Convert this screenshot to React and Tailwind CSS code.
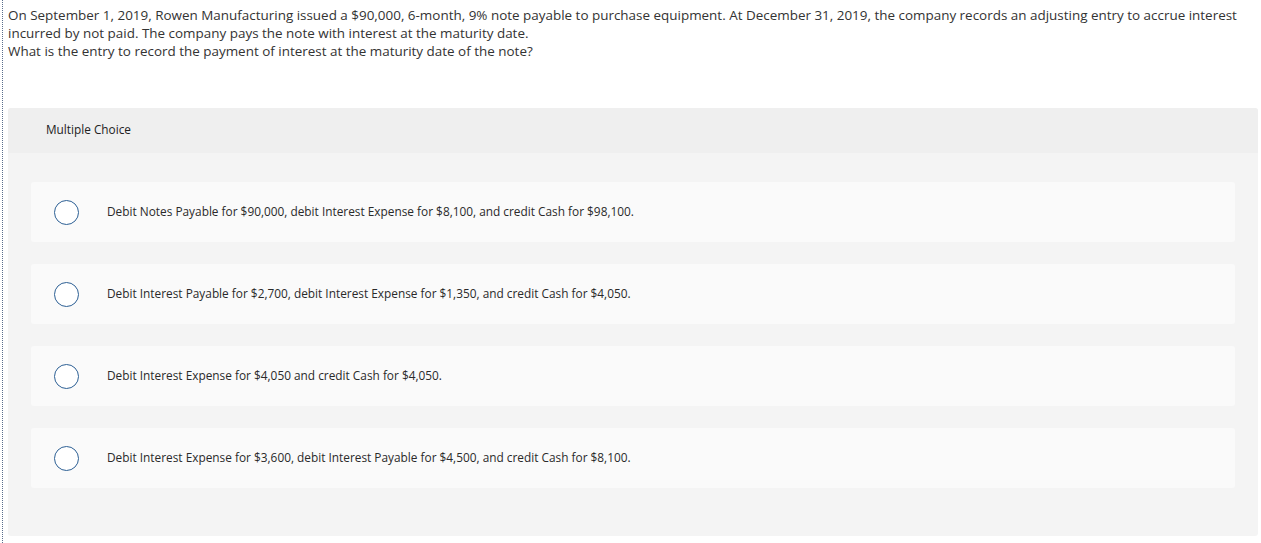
const options = [
  'Debit Notes Payable for $90,000, debit Interest Expense for $8,100, and credit Cash for $98,100.',
  'Debit Interest Payable for $2,700, debit Interest Expense for $1,350, and credit Cash for $4,050.',
  'Debit Interest Expense for $4,050 and credit Cash for $4,050.',
  'Debit Interest Expense for $3,600, debit Interest Payable for $4,500, and credit Cash for $8,100.',
];

export default function App() {
  return (
    <div className="min-h-[543px] bg-white font-['Open_Sans','Liberation_Sans',sans-serif]">
      <div className="ml-[2px] min-h-[543px] border-l border-dotted border-[#5a6e8c] pl-[5px] pt-[6px]">
        <p className="text-[13.45px] leading-[18px] text-[#333]">
          On September 1, 2019, Rowen Manufacturing issued a $90,000, 6-month, 9% note payable to purchase equipment. At December 31, 2019, the company records an adjusting entry to accrue interest incurred by not paid. The company pays the note with interest at the maturity date.
          <br />
          What is the entry to record the payment of interest at the maturity date of the note?
        </p>

        <div className="mt-[48px] mr-[3px] overflow-hidden rounded-[3px] bg-[#f4f4f4]">
          <div className="flex h-[45px] items-center bg-[#efefef] pb-[2px] pl-[38px] text-[11.8px] text-[#222]">
            Multiple Choice
          </div>
          <div className="flex flex-col gap-[22px] px-[23px] pt-[29px] pb-[48px]">
            {options.map((opt) => (
              <label
                key={opt}
                className="flex h-[60px] cursor-pointer items-center rounded-[3px] bg-[#fafafa] pl-[23px]"
              >
                <span className="h-[25px] w-[25px] shrink-0 rounded-full border-[1.5px] border-[#2c5f94] bg-white" />
                <span className="ml-[28px] text-[11.85px] text-[#2a2a2a]">{opt}</span>
              </label>
            ))}
          </div>
        </div>
      </div>
    </div>
  );
}
